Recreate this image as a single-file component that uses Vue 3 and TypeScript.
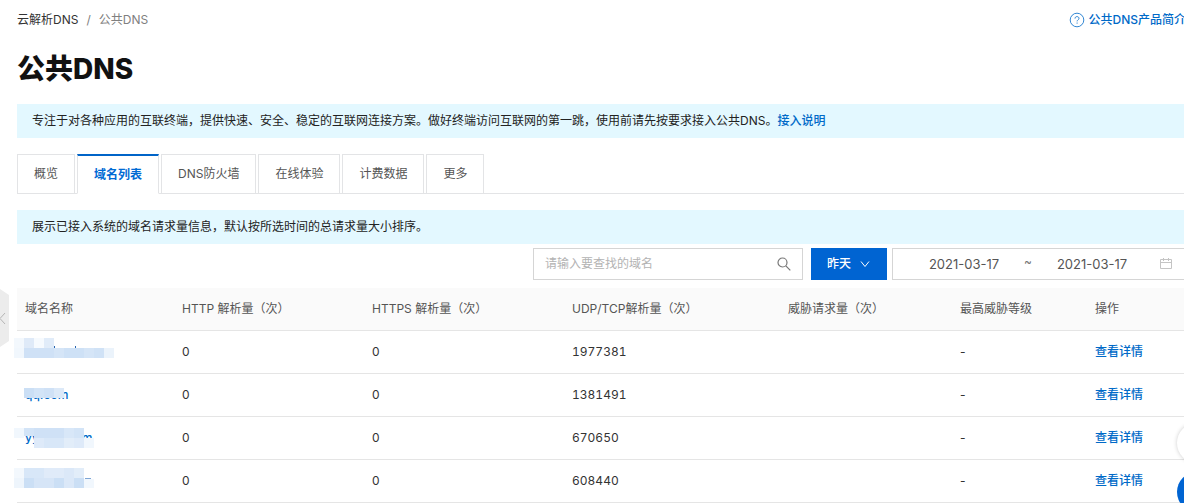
<script setup lang="ts">
import { ref } from 'vue'

type Block = [x: number, y: number, w: number, h: number, fill: string]

interface DomainRow {
  id: number
  text: string
  tail?: string
  http: number
  https: number
  udp: number
  blocks: Block[]
}

const tabs = ['概览', '域名列表', 'DNS防火墙', '在线体验', '计费数据', '更多']
const activeTab = ref('域名列表')
const keyword = ref('')
const startDate = ref('2021-03-17')
const endDate = ref('2021-03-17')
const headings = ['域名名称', 'HTTP 解析量（次）', 'HTTPS 解析量（次）', 'UDP/TCP解析量（次）', '威胁请求量（次）', '最高威胁等级', '操作']

// Masking blocks hide the customers' domain names; coordinates are inside the name cell's mask.
const rows: DomainRow[] = [
  {
    id: 1, text: '', http: 0, https: 0, udp: 1977381,
    blocks: [
      [4, 7, 10, 10, '#f3f8fd'], [14, 7, 10, 10, '#dfeaf8'], [24, 7, 10, 10, '#f6fafe'], [34, 7, 10, 10, '#e1ecf9'],
      [4, 17, 10, 10, '#f1f7fd'], [14, 17, 30, 10, '#cfe1f6'], [44, 17, 10, 10, '#d5e5f7'], [54, 17, 20, 10, '#cee1f6'],
      [74, 17, 10, 10, '#d5e5f7'], [84, 17, 10, 10, '#d0e2f6'], [94, 17, 10, 10, '#ebf3fb'],
      [44, 15, 1, 2, '#2462ad'], [65, 15, 1, 2, '#2462ad'],
    ],
  },
  {
    id: 2, text: 'qq.com', http: 0, https: 0, udp: 1381491,
    blocks: [
      [14, 14, 10, 10, '#cbdff5'], [24, 14, 10, 10, '#d3e4f7'], [34, 14, 10, 10, '#cfe1f6'], [44, 14, 10, 10, '#dce9f8'],
    ],
  },
  {
    id: 3, text: 'yy', tail: 'm', http: 0, https: 0, udp: 670650,
    blocks: [
      [4, 11, 10, 10, '#f1f7fd'], [14, 11, 10, 8, '#d3e4f7'], [24, 11, 30, 10, '#cfe1f6'], [54, 11, 10, 10, '#d8e7f8'],
      [64, 11, 10, 10, '#d3e4f7'], [24, 21, 10, 10, '#deeaf9'], [34, 21, 20, 10, '#d8e7f8'], [54, 21, 10, 10, '#e2edf9'],
      [64, 21, 10, 10, '#deeaf9'], [74, 21, 10, 10, '#f1f7fd'],
    ],
  },
  {
    id: 4, text: '', http: 0, https: 0, udp: 608440,
    blocks: [
      [4, 8, 10, 10, '#f3f8fd'], [14, 8, 20, 10, '#d8e7f8'], [34, 8, 20, 10, '#e0ebf9'], [54, 8, 10, 10, '#dbe8f8'],
      [64, 8, 10, 10, '#e2edf9'], [4, 18, 10, 10, '#eef5fc'], [14, 18, 10, 10, '#cbdff5'], [24, 18, 20, 10, '#d6e5f7'],
      [44, 18, 10, 10, '#cbdff5'], [54, 18, 10, 10, '#dbe8f8'], [64, 18, 10, 10, '#cbdff5'],
      [74, 19, 10, 9, '#f1f7fd'], [75, 18, 6, 1, '#7ea6d6'],
    ],
  },
]
</script>

<template>
  <div class="page">
    <header class="top">
      <nav class="crumbs" aria-label="面包屑">
        <a href="#">云解析DNS</a><span class="sep">/</span><span>公共DNS</span>
      </nav>
      <a class="help" href="#">
        <svg width="16" height="16" viewBox="0 0 16 16" fill="none" stroke="currentColor" stroke-width=".8" aria-hidden="true">
          <circle cx="8" cy="8" r="6.800" />
          <path d="M6 6.600c0-1.200.8-2 2-2s2 .8 2 1.800c0 1.300-1.900 1.500-1.900 3M8.100 10.500v1.200" />
        </svg>
        <span>公共DNS产品简介</span>
      </a>
    </header>

    <h1>公共DNS</h1>

    <p class="notice">
      专注于对各种应用的互联终端，提供快速、安全、稳定的互联网连接方案。做好终端访问互联网的第一跳，使用前请先按要求接入公共DNS。<a href="#">接入说明</a>
    </p>

    <div class="tabs" role="tablist">
      <button
        v-for="tab in tabs" :key="tab" type="button" role="tab" class="tab"
        :class="{ active: tab === activeTab }" :aria-selected="tab === activeTab" @click="activeTab = tab"
      >{{ tab }}</button>
    </div>

    <p class="notice">展示已接入系统的域名请求量信息，默认按所选时间的总请求量大小排序。</p>

    <div class="filters">
      <div class="search">
        <input v-model="keyword" type="text" placeholder="请输入要查找的域名" aria-label="请输入要查找的域名">
        <button type="button" aria-label="搜索">
          <svg width="14" height="14" viewBox="0 0 14 14" fill="none" stroke="#777" stroke-width="1.200">
            <circle cx="5.500" cy="5.500" r="4.500" /><path d="M8.800 8.800 13.300 13.300" />
          </svg>
        </button>
      </div>
      <button type="button" class="day">
        <span>昨天</span>
        <svg width="10" height="8" viewBox="0 0 10 8" fill="none" stroke="#fff"><path d="m1 1.500 4 5 4-5" /></svg>
      </button>
      <div class="range">
        <input v-model="startDate" type="text" aria-label="开始日期">
        <span class="tilde">~</span>
        <input v-model="endDate" type="text" aria-label="结束日期">
        <svg width="12" height="12" viewBox="0 0 12 12" fill="none" stroke="#c4c4c4" aria-hidden="true">
          <path d="M.5 1.500h11v9H.5zM.5 4.500h11M3.500 0v3M8.500 0v3" />
        </svg>
      </div>
    </div>

    <table>
      <colgroup>
        <col class="c-name"><col class="c-http"><col class="c-https"><col class="c-udp"><col class="c-threat"><col class="c-level"><col>
      </colgroup>
      <thead>
        <tr><th v-for="h in headings" :key="h" scope="col">{{ h }}</th></tr>
      </thead>
      <tbody>
        <tr v-for="row in rows" :key="row.id">
          <td class="name">
            <a href="#" aria-label="域名">{{ row.text }}<span v-if="row.tail" class="tail">{{ row.tail }}</span></a>
            <svg class="mask" width="120" height="42" viewBox="0 0 120 42" shape-rendering="crispEdges" aria-hidden="true">
              <rect v-for="(b, i) in row.blocks" :key="i" :x="b[0]" :y="b[1]" :width="b[2]" :height="b[3]" :fill="b[4]" />
            </svg>
          </td>
          <td>{{ row.http }}</td>
          <td>{{ row.https }}</td>
          <td class="num">{{ row.udp }}</td>
          <td></td>
          <td>-</td>
          <td><a href="#">查看详情</a></td>
        </tr>
      </tbody>
    </table>

    <button type="button" class="collapse" aria-label="收起菜单">
      <svg width="9" height="58" viewBox="0 0 9 58" fill="none">
        <path d="M0 0 9 6v46l-9 6z" fill="#ececec" /><path d="M5 24 0 29.500 5 35" stroke="#b5b5b5" />
      </svg>
    </button>
    <button type="button" class="float light" aria-label="反馈"></button>
    <button type="button" class="float blue" aria-label="咨询"></button>
  </div>
</template>

<style>
body { margin: 0; background: #fff; }
</style>

<style scoped>
.page {
  position: relative;
  box-sizing: border-box;
  padding-left: 17px;
  overflow: hidden;
  color: #333;
  font: 12px/18px Inter, "Noto Sans CJK SC", sans-serif;
}
* { box-sizing: border-box; }
a { color: #006ac8; text-decoration: none; font-weight: 500; }
button, input { font: inherit; border-radius: 0; }
button { cursor: pointer; }
.top { display: flex; justify-content: space-between; padding-top: 11px; }
.crumbs { color: #808080; }
.crumbs a { color: #333; font-weight: 400; }
.sep { margin: 0 8px; }
.help { display: flex; align-items: center; gap: 4px; margin-right: -2px; white-space: nowrap; }
h1 { margin: 22px 0 17px; color: #111; font-size: 28px; line-height: 36px; font-weight: 800; }
.notice { margin: 0; padding: 8px 15px; background: #e3f8ff; color: #222; white-space: nowrap; }
.tabs { display: flex; gap: 2px; margin: 16px 0; height: 40px; border-bottom: 1px solid #e3e4e6; }
.tab { height: 40px; padding: 0 16px; border: 1px solid #e3e4e6; background: #fff; color: #555; white-space: nowrap; }
.tab.active { border-top: 2px solid #0064c8; border-bottom-color: #fff; color: #006ad4; font-weight: 700; }
.filters { display: flex; justify-content: flex-end; margin: 4px -8px 8px 0; }
.search { display: flex; width: 270px; height: 32px; border: 1px solid #d5d5d5; }
.search input { flex: 1; min-width: 0; padding: 0 11px; border: 0; outline: 0; }
.search input::placeholder { color: #b3b3b3; opacity: 1; }
.search button { display: flex; align-items: center; padding: 0 11px; border: 0; background: none; }
.day { display: flex; align-items: center; gap: 9px; width: 76px; margin: 0 5px 0 8px; padding: 0 16px; border: 0; background: #0064d2; color: #fff; font-weight: 500; }
.range { display: flex; align-items: center; width: 300px; padding: 0 19px 0 11px; border: 1px solid #d5d5d5; color: #777; }
.range input { flex: 1; min-width: 0; padding: 0; border: 0; outline: 0; color: #555; text-align: center; font-size: 13px; }
.range svg { margin-left: 8px; }
.tilde { padding-bottom: 4px; }
table { width: 100%; table-layout: fixed; border-collapse: separate; border-spacing: 0; }
.c-name { width: 157px; }
.c-http { width: 190px; }
.c-https { width: 200px; }
.c-udp { width: 216px; }
.c-threat { width: 172px; }
.c-level { width: 135px; }
th, td { height: 43px; padding: 0 8px; border-bottom: 1px solid #e5e5e5; text-align: left; white-space: nowrap; }
th { background: #fafafa; color: #555; font-weight: 400; }
.num { font-variant-numeric: tabular-nums; }
.name { position: relative; }
.tail { margin-left: 43px; }
.mask { position: absolute; left: -7px; top: 0; pointer-events: none; }
.collapse { position: absolute; left: 0; top: 289px; padding: 0; border: 0; background: none; line-height: 0; }
.float { position: absolute; right: -33px; width: 40px; height: 40px; padding: 0; border: 0; border-radius: 50%; }
.light { top: 423px; background: #fff; box-shadow: 0 0 4px rgba(0, 0, 0, 0.2); }
.blue { top: 472px; background: #0064d2; }
</style>
